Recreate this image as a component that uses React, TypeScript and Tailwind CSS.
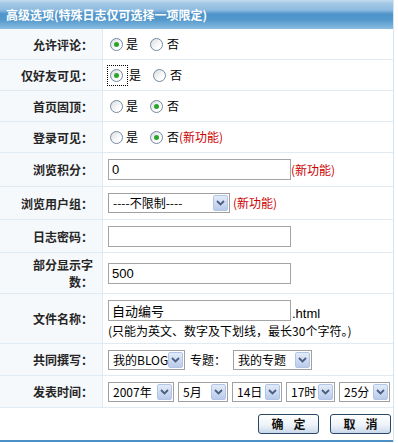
import React from "react";

const CJK = "font-['Noto_Sans_CJK_SC','Liberation_Sans',sans-serif]";
const LAT = "font-['Liberation_Sans','Noto_Sans_CJK_SC',sans-serif]";

function Radio({ checked }: { checked?: boolean }) {
  return (
    <span className="inline-flex h-[13px] w-[13px] items-center justify-center rounded-full border border-[#7489a0] bg-[linear-gradient(135deg,#d8dcdf,#ffffff_70%)]">
      {checked && <span className="h-[5px] w-[5px] rounded-full bg-[#2aa52a]" />}
    </span>
  );
}

function RadioPair({ yes, focus, extra }: { yes: boolean; focus?: boolean; extra?: React.ReactNode }) {
  return (
    <div className="flex items-center">
      {focus ? (
        <span className="-ml-[1px] flex border border-dotted border-black py-[3px] pl-[2px] pr-[4px]">
          <Radio checked={yes} />
        </span>
      ) : (
        <span className="ml-[2px] flex">
          <Radio checked={yes} />
        </span>
      )}
      <span className={focus ? "ml-[1px]" : "ml-[3px]"}>是</span>
      <span className="ml-[12px] flex">
        <Radio checked={!yes} />
      </span>
      <span className="ml-[4px]">否</span>
      {extra}
    </div>
  );
}

function Arrow() {
  return (
    <span className="flex h-[16px] w-[15px] shrink-0 items-center justify-center rounded-[2px] border border-[#b3c5e6] bg-[linear-gradient(to_bottom,#e3ebf8,#b9cbea)]">
      <svg width="9" height="6" viewBox="0 0 9 6">
        <path d="M1 1 L4.5 4.5 L8 1" stroke="#4a5e82" strokeWidth="1.8" fill="none" />
      </svg>
    </span>
  );
}

function Select({ text, w }: { text: string; w: string }) {
  return (
    <span className={`inline-flex h-[20px] shrink-0 items-center border border-[#a0a0a0] bg-white pr-[1px] ${w}`}>
      <span className="flex-1 overflow-hidden whitespace-nowrap pl-[4px] text-[12px] text-black">{text}</span>
      <Arrow />
    </span>
  );
}

function Field({ value = "" }: { value?: string }) {
  return (
    <input
      readOnly
      defaultValue={value}
      className={`h-[21px] w-[183px] shrink-0 border border-[#a5a5a5] bg-white px-[3px] text-[13px] text-black outline-none ${LAT}`}
    />
  );
}

function New() {
  return <span className="text-[12px] text-[#cc0000]">(新功能)</span>;
}

function Row({ label, h, children }: { label: React.ReactNode; h: string; children: React.ReactNode }) {
  return (
    <div className={`flex border-b border-[#e0eaf2] ${h}`}>
      <div className="flex w-[103px] shrink-0 items-center justify-end border-r border-[#e0eaf2] bg-[#f6f9fc] pr-[9px] text-right text-[12px] font-bold leading-[17px] text-[#262626]">
        {label}
      </div>
      <div className="flex flex-1 items-center pl-[5px] text-[12px] text-black">{children}</div>
    </div>
  );
}

function Btn({ a, b }: { a: string; b: string }) {
  return (
    <button className="flex h-[20px] w-[61px] items-center justify-center rounded-[3px] border border-[#2a4766] bg-[linear-gradient(to_bottom,#ffffff,#eef3f9_55%,#cad8ea)] text-[12px] font-bold leading-none text-[#111]">
      <span>{a}</span>
      <span className="ml-[10px]">{b}</span>
    </button>
  );
}

export default function App() {
  return (
    <div className={`h-[443px] w-[398px] bg-white ${CJK}`}>
      <div className="w-[394px] border-r border-[#d6e5f1]">
        <div className="flex h-[29px] items-center bg-[linear-gradient(to_bottom,#c3dbed_0px,#a6cae6_3px,#8dbbe0_10px,#4f94c9_14px,#5499cc_20px,#8bbde2_29px)] pl-[6px] text-[12px] font-bold text-white">
          高级选项(特殊日志仅可选择一项限定)
        </div>

        <Row label="允许评论：" h="h-[31px]">
          <RadioPair yes />
        </Row>
        <Row label="仅好友可见：" h="h-[31px]">
          <RadioPair yes focus />
        </Row>
        <Row label="首页固顶：" h="h-[31px]">
          <RadioPair yes={false} />
        </Row>
        <Row label="登录可见：" h="h-[31px]">
          <RadioPair yes={false} extra={<New />} />
        </Row>
        <Row label="浏览积分：" h="h-[34px]">
          <Field value="0" />
          <New />
        </Row>
        <Row label="浏览用户组：" h="h-[33px]">
          <Select text="----不限制----" w="w-[122px]" />
          <span className="ml-[3px]">
            <New />
          </span>
        </Row>
        <Row label="日志密码：" h="h-[33px]">
          <Field />
        </Row>
        <Row
          label={
            <span>
              部分显示字
              <br />
              数：
            </span>
          }
          h="h-[41px]"
        >
          <Field value="500" />
        </Row>
        <Row label="文件名称：" h="h-[50px]">
          <div className="flex flex-col gap-[3px]">
            <div className="flex items-end">
              <Field value="自动编号" />
              <span className={`ml-[1px] text-[13px] leading-[15px] ${LAT}`}>.html</span>
            </div>
            <span className="leading-[13px]">(只能为英文、数字及下划线，最长30个字符。)</span>
          </div>
        </Row>
        <Row label="共同撰写：" h="h-[32px]">
          <Select text="我的BLOG" w="w-[77px]" />
          <span className="ml-[5px] mr-[7px]">专题：</span>
          <Select text="我的专题" w="w-[79px]" />
        </Row>
        <Row label="发表时间：" h="h-[32px]">
          <div className="flex gap-[4px]">
            <Select text="2007年" w="w-[66px]" />
            <Select text="5月" w="w-[50px]" />
            <Select text="14日" w="w-[50px]" />
            <Select text="17时" w="w-[49px]" />
            <Select text="25分" w="w-[51px]" />
          </div>
        </Row>

        <div className="flex h-[34px] items-center justify-end gap-[11px] border-b-2 border-[#4f8fc8] pr-[2px]">
          <Btn a="确" b="定" />
          <Btn a="取" b="消" />
        </div>
      </div>
    </div>
  );
}
